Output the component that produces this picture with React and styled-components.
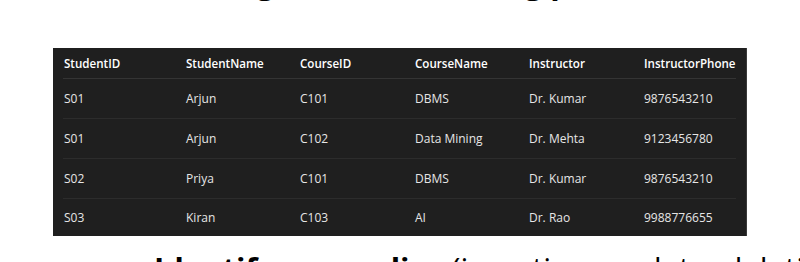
import React from 'react';
import styled, { createGlobalStyle } from 'styled-components';

const GlobalStyle = createGlobalStyle`
  html, body {
    margin: 0;
    padding: 0;
    background: #ffffff;
    overflow: hidden;
  }
`;

const columns = ['StudentID', 'StudentName', 'CourseID', 'CourseName', 'Instructor', 'InstructorPhone'];
const widths = [122, 114, 115, 114, 115, 102];

const rows = [
  ['S01', 'Arjun', 'C101', 'DBMS', 'Dr. Kumar', '9876543210'],
  ['S01', 'Arjun', 'C102', 'Data Mining', 'Dr. Mehta', '9123456780'],
  ['S02', 'Priya', 'C101', 'DBMS', 'Dr. Kumar', '9876543210'],
  ['S03', 'Kiran', 'C103', 'AI', 'Dr. Rao', '9988776655'],
];

const App = () => {
  return (
    <Slide>
      <GlobalStyle />
      <TopLine>In the following relation showing partial data</TopLine>
      <Table>
        <HeadRow>
          {columns.map((c, i) => (
            <Cell key={c} width={widths[i]} head>{c}</Cell>
          ))}
        </HeadRow>
        {rows.map((r, ri) => (
          <Row key={ri} last={ri === rows.length - 1}>
            {r.map((v, i) => (
              <Cell key={i} width={widths[i]}>{v}</Cell>
            ))}
          </Row>
        ))}
      </Table>
      <BottomLine>
        <b>Identify anomalies</b> (insertion, update, deletion)
      </BottomLine>
    </Slide>
  );
};

export default App;

const Slide = styled.div`
  width: 800px;
  height: 262px;
  overflow: hidden;
  display: flex;
  flex-direction: column;
  font-family: "Open Sans", "Noto Sans", sans-serif;
`;

const TopLine = styled.div`
  font-size: 31px;
  font-weight: 700;
  line-height: 40px;
  margin-top: -38px;
  padding-left: 32px;
  color: #000;
  white-space: nowrap;
`;

const Table = styled.div`
  margin: 46px 0 0 53px;
  width: 693px;
  background: #1f1f1f;
  border-right: 1px solid #3a3a3a;
  display: flex;
  flex-direction: column;
`;

const HeadRow = styled.div`
  display: flex;
  height: 31px;
  padding-top: 1px;
  box-sizing: border-box;
  align-items: center;
  border-bottom: 1px solid #343434;
  margin: 0 10px;
`;

const Row = styled.div`
  display: flex;
  height: ${p => (p.last ? '37px' : '39px')};
  align-items: center;
  border-bottom: ${p => (p.last ? 'none' : '1px solid #2c2c2c')};
  margin: 0 10px;
`;

const Cell = styled.div`
  width: ${p => p.width}px;
  flex: none;
  padding-left: 1px;
  box-sizing: border-box;
  font-size: ${p => (p.head ? '11.6px' : '12px')};
  font-weight: ${p => (p.head ? 600 : 400)};
  color: ${p => (p.head ? '#ffffff' : '#e6e6e6')};
  white-space: nowrap;
`;

const BottomLine = styled.div`
  margin: 12px 0 0 154px;
  font-size: 31px;
  line-height: 40px;
  color: #000;
  white-space: nowrap;
  b {
    font-weight: 700;
  }
`;
